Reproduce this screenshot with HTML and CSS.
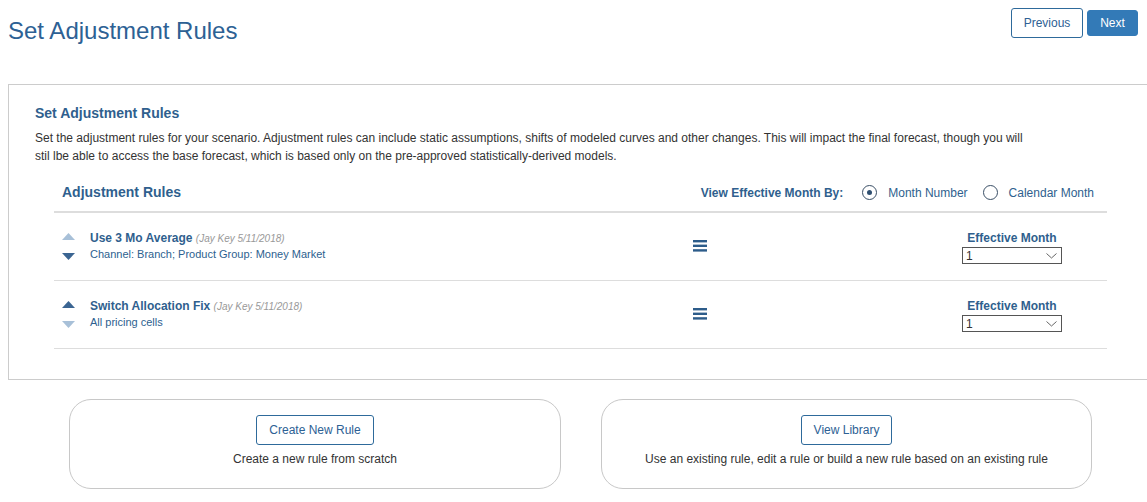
FILE: index.html
```html
<!DOCTYPE html>
<html>
<head>
<meta charset="utf-8">
<link rel="stylesheet" href="styles.css">
</head>
<body>
<div class="topbar">
  <h1 class="page-title">Set Adjustment Rules</h1>
  <div class="nav-buttons">
    <button class="btn btn-outline btn-prev">Previous</button>
    <button class="btn btn-primary">Next</button>
  </div>
</div>

<div class="panel">
  <h3 class="panel-title">Set Adjustment Rules</h3>
  <p class="panel-desc">Set the adjustment rules for your scenario. Adjustment rules can include static assumptions, shifts of modeled curves and other changes. This will impact the final forecast, though you will stil lbe able to access the base forecast, which is based only on the pre-approved statistically-derived models.</p>

  <div class="rules">
    <div class="rules-head">
      <h4 class="rules-title">Adjustment Rules</h4>
      <div class="view-by">
        <span class="view-label">View Effective Month By:</span>
        <span class="radio checked"></span>
        <span class="radio-label">Month Number</span>
        <span class="radio"></span>
        <span class="radio-label">Calendar Month</span>
      </div>
    </div>

    <div class="rule-row">
      <div class="arrows">
        <svg class="arrow light" width="13" height="7" viewBox="0 0 13 7"><polygon points="0,7 6.5,0 13,7"/></svg>
        <svg class="arrow dark" width="13" height="7" viewBox="0 0 13 7"><polygon points="0,0 13,0 6.5,7"/></svg>
      </div>
      <div class="rule-info">
        <div class="rule-name">Use 3 Mo Average <span class="rule-meta">(Jay Key 5/11/2018)</span></div>
        <div class="rule-scope">Channel: Branch; Product Group: Money Market</div>
      </div>
      <svg class="menu-icon" width="14" height="12" viewBox="0 0 14 12"><rect x="0" y="0" width="14" height="2.4"/><rect x="0" y="4.6" width="14" height="2.4"/><rect x="0" y="9.2" width="14" height="2.4"/></svg>
      <div class="spacer"></div>
      <div class="eff">
        <div class="eff-label">Effective Month</div>
        <div class="select"><span>1</span><svg width="11" height="6" viewBox="0 0 11 6"><polyline points="0.5,0.5 5.5,5 10.5,0.5" fill="none" stroke="#666" stroke-width="1"/></svg></div>
      </div>
      <div></div>
    </div>

    <div class="rule-row">
      <div class="arrows">
        <svg class="arrow dark" width="13" height="7" viewBox="0 0 13 7"><polygon points="0,7 6.5,0 13,7"/></svg>
        <svg class="arrow light" width="13" height="7" viewBox="0 0 13 7"><polygon points="0,0 13,0 6.5,7"/></svg>
      </div>
      <div class="rule-info">
        <div class="rule-name">Switch Allocation Fix <span class="rule-meta">(Jay Key 5/11/2018)</span></div>
        <div class="rule-scope">All pricing cells</div>
      </div>
      <svg class="menu-icon" width="14" height="12" viewBox="0 0 14 12"><rect x="0" y="0" width="14" height="2.4"/><rect x="0" y="4.6" width="14" height="2.4"/><rect x="0" y="9.2" width="14" height="2.4"/></svg>
      <div class="spacer"></div>
      <div class="eff">
        <div class="eff-label">Effective Month</div>
        <div class="select"><span>1</span><svg width="11" height="6" viewBox="0 0 11 6"><polyline points="0.5,0.5 5.5,5 10.5,0.5" fill="none" stroke="#666" stroke-width="1"/></svg></div>
      </div>
      <div></div>
    </div>
  </div>
</div>

<div class="cards">
  <div class="card card-left">
    <button class="btn btn-outline btn-card">Create New Rule</button>
    <div class="card-text">Create a new rule from scratch</div>
  </div>
  <div class="card card-right">
    <button class="btn btn-outline btn-card">View Library</button>
    <div class="card-text">Use an existing rule, edit a rule or build a new rule based on an existing rule</div>
  </div>
</div>
</body>
</html>
```

FILE: styles.css
```css
* { box-sizing: border-box; }
html, body { overflow: hidden; }
body {
  margin: 0;
  width: 1147px;
  font-family: "Liberation Sans", Arial, sans-serif;
  color: #333;
  background: #fff;
}
.topbar {
  display: flex;
  justify-content: space-between;
  align-items: flex-start;
  height: 84px;
  padding: 8px 9px 0 8px;
}
.page-title {
  margin: 9px 0 0 0;
  font-size: 24px;
  line-height: 28px;
  font-weight: normal;
  color: #2d6194;
}
.nav-buttons {
  display: flex;
  align-items: flex-start;
  gap: 4px;
}
.btn {
  font-family: "Liberation Sans", Arial, sans-serif;
  font-size: 12px;
  border-radius: 3px;
  cursor: pointer;
}
.btn-outline {
  background: #fff;
  border: 1px solid #2e6a9b;
  color: #2d6194;
}
.btn-prev {
  height: 30px;
  width: 72px;
  padding: 0;
}
.btn-primary {
  margin-top: 2px;
  height: 26px;
  width: 51px;
  padding: 0;
  background: #337ab7;
  border: 1px solid #337ab7;
  color: #fff;
}
.panel {
  margin-left: 8px;
  width: 1150px;
  height: 296px;
  border: 1px solid #ccc;
  padding: 20px 0 0 26px;
}
.panel-title {
  margin: 0;
  font-size: 14px;
  line-height: 17px;
  font-weight: bold;
  color: #2f5f8e;
}
.panel-desc {
  margin: 7px 0 0 0;
  width: 1000px;
  font-size: 12px;
  line-height: 18px;
  color: #333;
}
.rules {
  margin-left: 19px;
  width: 1053px;
}
.rules-head {
  display: flex;
  justify-content: space-between;
  align-items: center;
  height: 48px;
  padding: 19px 13px 10px 8px;
  border-bottom: 2px solid #ddd;
}
.rules-title {
  margin: 0;
  font-size: 14px;
  line-height: 17px;
  font-weight: bold;
  color: #2f5f8e;
}
.view-by {
  display: flex;
  align-items: center;
  font-size: 12px;
  color: #2f5f8e;
}
.view-label {
  font-weight: bold;
  margin-right: 19px;
}
.radio {
  width: 15px;
  height: 15px;
  border: 1px solid #3a4f66;
  border-radius: 50%;
  display: flex;
  align-items: center;
  justify-content: center;
  margin-right: 11px;
}
.radio.checked::after {
  content: "";
  width: 5px;
  height: 5px;
  border-radius: 50%;
  background: #2f4f70;
}
.radio-label {
  margin-right: 15px;
}
.radio-label:last-child { margin-right: 0; }
.rule-row {
  display: grid;
  grid-template-columns: 36px 603px 14px 1fr 100px 45px;
  align-items: center;
  height: 68px;
  border-bottom: 1px solid #ddd;
}
.arrows {
  display: flex;
  flex-direction: column;
  align-items: flex-start;
  padding-left: 8px;
  gap: 13px;
}
.arrow.light { fill: #a8c0d8; }
.arrow.dark { fill: #3b6592; }
.rule-info {
  margin-top: -2px;
}
.rule-name {
  font-size: 12px;
  line-height: 16px;
  font-weight: bold;
  color: #2f5f8e;
}
.rule-meta {
  font-size: 10px;
  font-weight: normal;
  font-style: italic;
  color: #999;
}
.rule-scope {
  font-size: 11px;
  line-height: 15px;
  color: #2d5f8f;
}
.menu-icon {
  fill: #2d5c8a;
  margin-top: -1px;
}
.eff {
  display: flex;
  flex-direction: column;
  align-items: center;
  padding-top: 2px;
}
.eff-label {
  font-size: 12px;
  line-height: 14px;
  font-weight: bold;
  color: #2f5f8e;
  margin-bottom: 2px;
}
.select {
  width: 100px;
  height: 17px;
  border: 1px solid #555;
  display: flex;
  justify-content: space-between;
  align-items: center;
  padding: 0 4px 0 3px;
  font-size: 12px;
  color: #333;
  background: #fff;
}
.cards {
  display: flex;
  gap: 40px;
  padding-left: 69px;
  margin-top: 19px;
}
.card {
  height: 90px;
  border: 1px solid #c8c8c8;
  border-radius: 22px;
  display: flex;
  flex-direction: column;
  align-items: center;
  padding-top: 15px;
}
.card-left { width: 492px; }
.card-right { width: 491px; }
.btn-card {
  height: 30px;
  padding: 0 12px;
}
.card-text {
  margin-top: 7px;
  font-size: 12px;
  line-height: 14px;
  color: #333;
}
```
